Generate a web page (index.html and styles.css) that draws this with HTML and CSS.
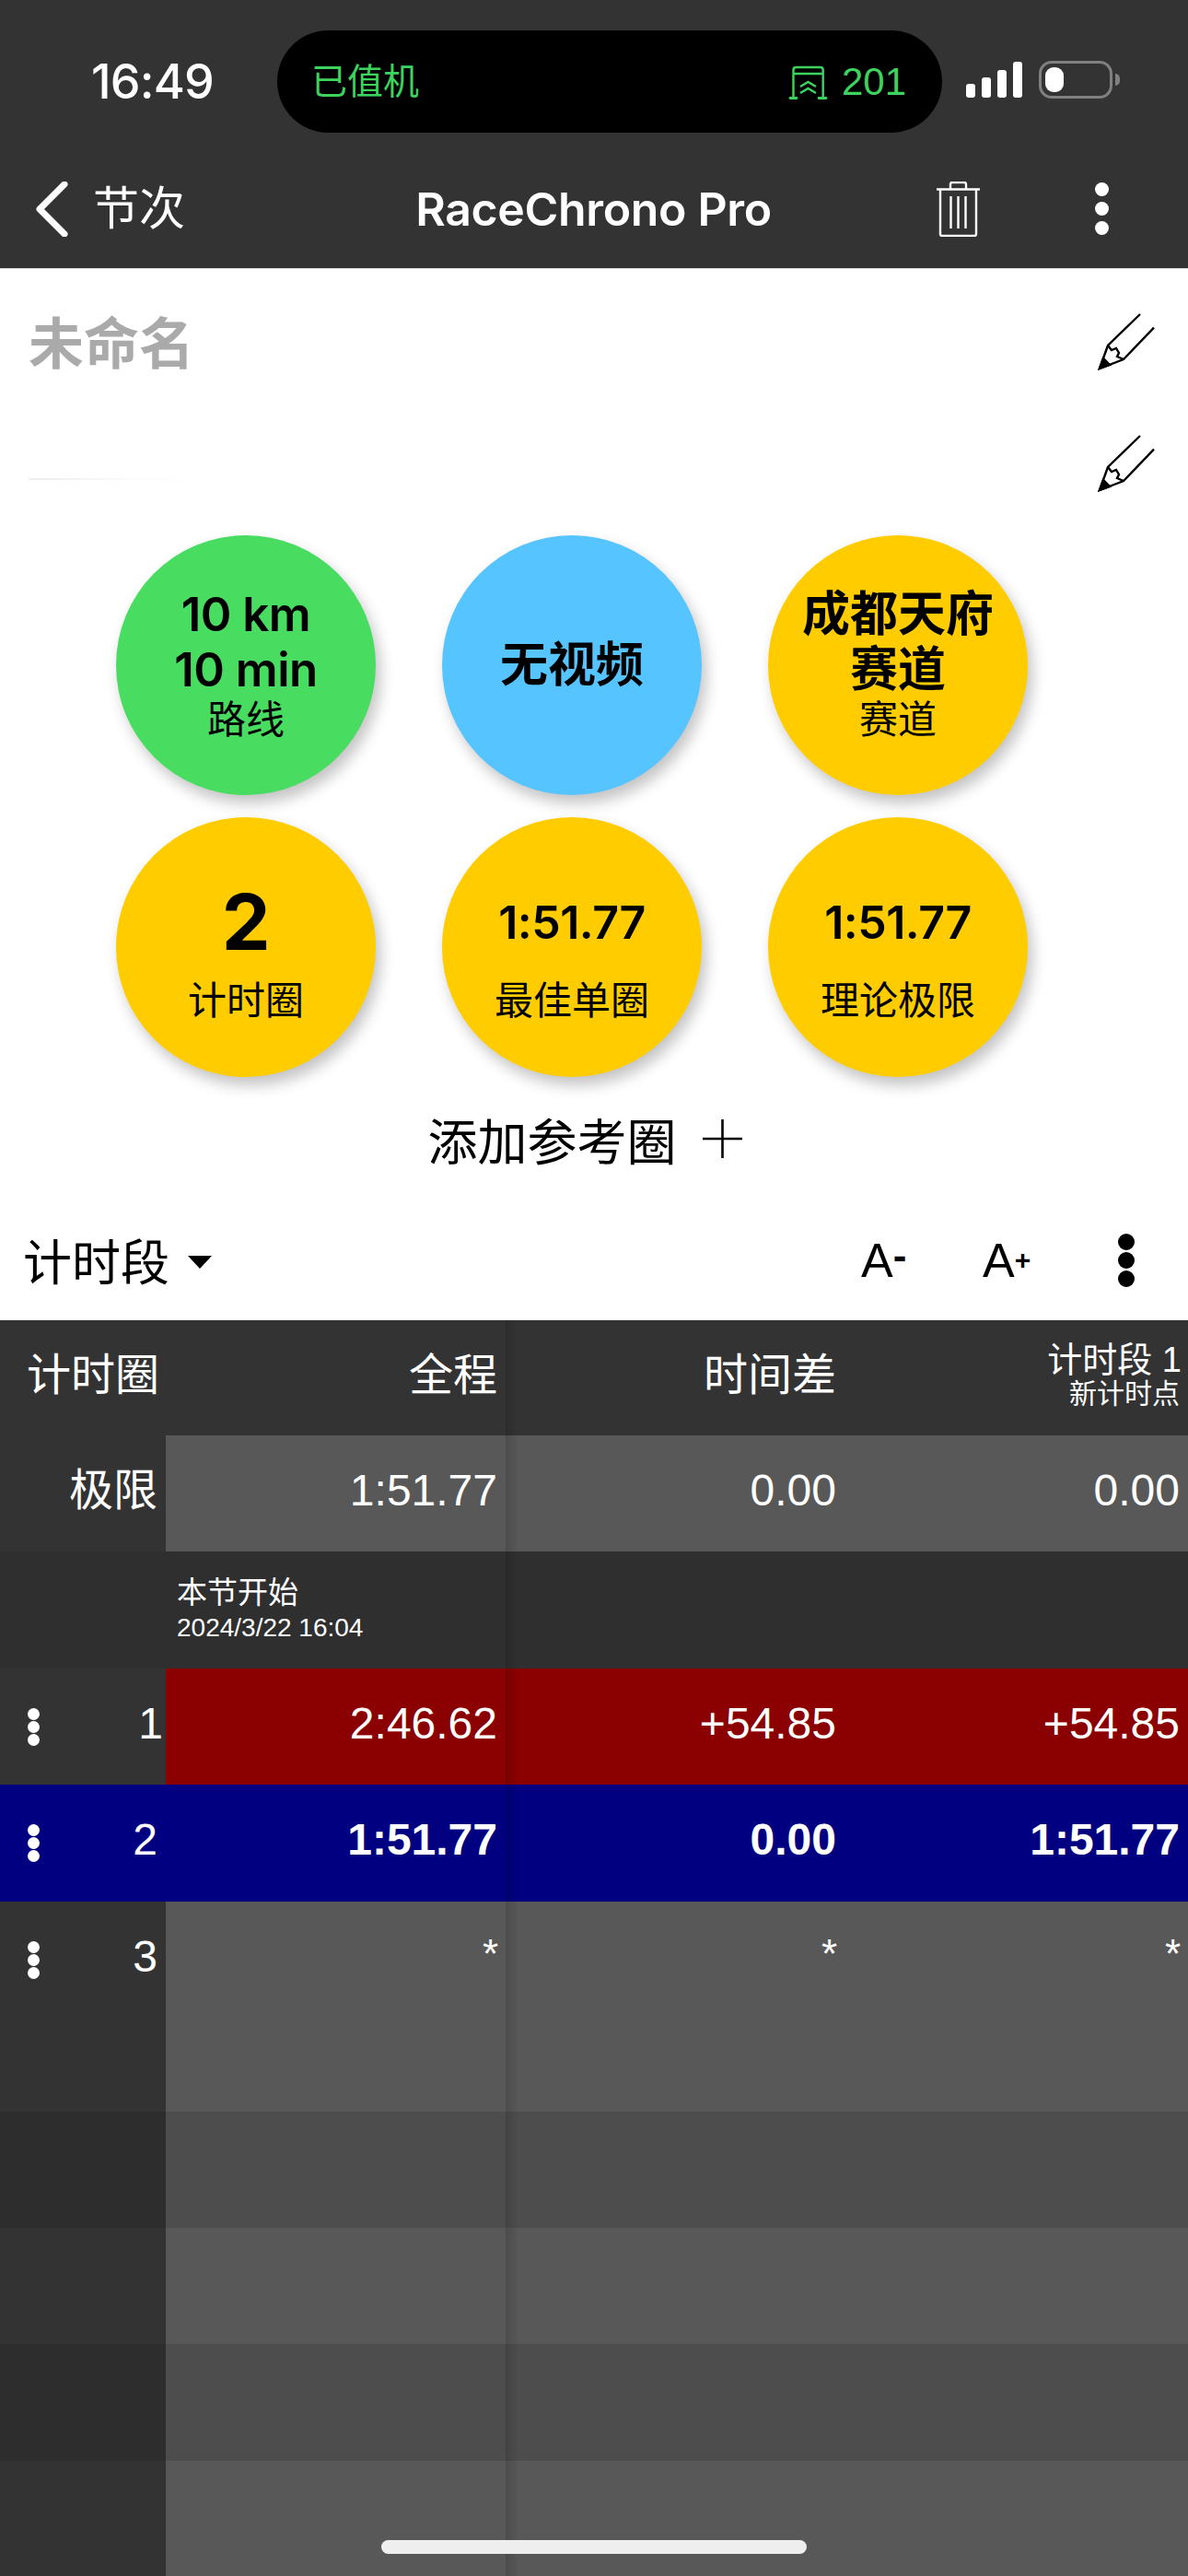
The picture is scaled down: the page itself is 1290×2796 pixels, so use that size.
FILE: index.html
```html
<!DOCTYPE html>
<html lang="zh-CN">
<head>
    <meta charset="UTF-8">
    <meta name="viewport" content="width=device-width, initial-scale=1.0">
    <title>RaceChrono Pro</title>
    <link rel="stylesheet" href="styles.css">
</head>
<body>
<div class="page">
    <header class="top">
        <div class="status">
            <span class="time">16:49</span>
            <div class="island">
                <span class="island-text">已值机</span>
                <div class="gate">
                    <svg width="60" height="50" viewBox="0 0 60 50" fill="none" stroke="#3dd35c" stroke-width="2.4">
                        <path d="M9.5 40V10Q9.5 7 12.5 7H38.7Q41.7 7 41.7 10V40"/>
                        <path d="M9.5 14H41.7"/>
                        <path d="M6 40.5H13M37 40.5H45" stroke-width="2.8" stroke-linecap="round"/>
                        <path d="M17 28L25.5 23L34 28M17 35L25.5 30L34 35"/>
                    </svg>
                    <span class="gate-no">201</span>
                </div>
            </div>
            <div class="signal">
                <span class="bar bar1"></span>
                <span class="bar bar2"></span>
                <span class="bar bar3"></span>
                <span class="bar bar4"></span>
            </div>
            <div class="battery"><span class="charge"></span></div>
            <span class="nub"></span>
        </div>
        <nav class="nav">
            <div class="nav-left">
                <svg class="chevron" width="36" height="60" viewBox="0 0 36 60" fill="none" stroke="#fff" stroke-width="7" stroke-linecap="round" stroke-linejoin="round">
                    <path d="M31 3L4 30L31 57"/>
                </svg>
                <span class="back-text">节次</span>
            </div>
            <div class="nav-title">RaceChrono Pro</div>
            <div class="nav-right">
                <svg width="47" height="60" viewBox="0 0 47 60" fill="none" stroke="#fff" stroke-width="2.4">
                    <path d="M0 8.5H47"/>
                    <path d="M15 8V3Q15 1 17 1H30Q32 1 32 3V8"/>
                    <path d="M4 8.5V57Q4 59 6 59H41Q43 59 43 57V8.5"/>
                    <path d="M15.5 16V51M23.5 16V51M31.5 16V51"/>
                </svg>
                <div class="dots dots-nav"><i></i><i></i><i></i></div>
            </div>
        </nav>
    </header>

    <section class="names">
        <div class="name-row">
            <span class="name">未命名</span>
            <svg class="pencil" width="80" height="72" viewBox="0 0 80 72" fill="none" stroke="#000" stroke-width="2.4">
                <path d="M53 6L18 40L9 65L35 55L68 20.7"/>
                <path d="M18 40L22 45L27 43L30 48L28 52L35 55"/>
                <path d="M9 65L13 54L20 61Z" fill="#000"/>
            </svg>
        </div>
        <div class="name-row">
            <span class="note-line"></span>
            <svg class="pencil" width="80" height="72" viewBox="0 0 80 72" fill="none" stroke="#000" stroke-width="2.4">
                <path d="M53 6L18 40L9 65L35 55L68 20.7"/>
                <path d="M18 40L22 45L27 43L30 48L28 52L35 55"/>
                <path d="M9 65L13 54L20 61Z" fill="#000"/>
            </svg>
        </div>
    </section>

    <section class="circles">
        <div class="circle green">
            <div class="big">10 km</div>
            <div class="big">10 min</div>
            <div class="label">路线</div>
        </div>
        <div class="circle blue">
            <div class="big cjk">无视频</div>
        </div>
        <div class="circle yellow">
            <div class="big cjk">成都天府</div>
            <div class="big cjk">赛道</div>
            <div class="label">赛道</div>
        </div>
        <div class="circle yellow stat">
            <div class="value huge">2</div>
            <div class="label">计时圈</div>
        </div>
        <div class="circle yellow stat">
            <div class="value">1:51.77</div>
            <div class="label">最佳单圈</div>
        </div>
        <div class="circle yellow stat">
            <div class="value">1:51.77</div>
            <div class="label">理论极限</div>
        </div>
    </section>

    <div class="add-ref">
        <span>添加参考圈</span>
        <svg width="43" height="42" viewBox="0 0 43 42" stroke="#000" stroke-width="2.6"><path d="M0 21H43M21.5 0V42"/></svg>
    </div>

    <div class="toolbar">
        <span class="tool-title">计时段</span>
        <span class="caret"></span>
        <span class="font-btn minus-btn">A<small>-</small></span>
        <span class="font-btn">A<small>+</small></span>
        <div class="dots dots-tool"><i></i><i></i><i></i></div>
    </div>

    <div class="table">
        <div class="row head">
            <div class="cell lap lap-head">计时圈</div>
            <div class="cell">全程</div>
            <div class="cell">时间差</div>
            <div class="cell sector">
                <div class="sector-name">计时段 1</div>
                <div class="sector-sub">新计时点</div>
            </div>
        </div>
        <div class="row">
            <div class="cell lap">极限</div>
            <div class="cell grey">1:51.77</div>
            <div class="cell grey">0.00</div>
            <div class="cell grey">0.00</div>
        </div>
        <div class="row session">
            <div class="cell lap"></div>
            <div class="cell start">
                <div class="start-name">本节开始</div>
                <div class="start-date">2024/3/22 16:04</div>
            </div>
            <div class="cell"></div>
            <div class="cell"></div>
        </div>
        <div class="row slow">
            <div class="cell lap lap-one"><div class="dots"><i></i><i></i><i></i></div>1</div>
            <div class="cell">2:46.62</div>
            <div class="cell">+54.85</div>
            <div class="cell">+54.85</div>
        </div>
        <div class="row best">
            <div class="cell lap"><div class="dots"><i></i><i></i><i></i></div>2</div>
            <div class="cell">1:51.77</div>
            <div class="cell">0.00</div>
            <div class="cell">1:51.77</div>
        </div>
        <div class="row tall">
            <div class="cell lap"><div class="dots"><i></i><i></i><i></i></div>3</div>
            <div class="cell grey star">*</div>
            <div class="cell grey star">*</div>
            <div class="cell grey star">*</div>
        </div>
        <div class="row even">
            <div class="cell lap"></div><div class="cell"></div><div class="cell"></div><div class="cell"></div>
        </div>
        <div class="row">
            <div class="cell lap"></div><div class="cell grey"></div><div class="cell grey"></div><div class="cell grey"></div>
        </div>
        <div class="row even">
            <div class="cell lap"></div><div class="cell"></div><div class="cell"></div><div class="cell"></div>
        </div>
        <div class="row last">
            <div class="cell lap"></div><div class="cell grey"></div><div class="cell grey"></div><div class="cell grey"></div>
        </div>
        <div class="col-shadow"></div>
    </div>

    <div class="home-bar"></div>
</div>
</body>
</html>
```

FILE: styles.css
```css
* {
    box-sizing: border-box;
}
body {
    margin: 0;
    background: #fff;
    font-family: "Liberation Sans", "Noto Sans CJK SC", sans-serif;
    color: #000;
}
.page {
    position: relative;
    width: 1290px;
    height: 2796px;
    overflow: hidden;
}

/* status bar + nav */
.top {
    height: 292px;
    background: #333;
    color: #fff;
    border-bottom: 1px solid #ddd;
}
.status {
    display: flex;
    align-items: center;
    height: 144px;
    padding: 33px 0 0 99px;
}
.time {
    width: 202px;
    font-family: Inter, sans-serif;
    font-size: 52px;
    font-weight: 500;
    letter-spacing: -0.8px;
}
.island {
    display: flex;
    align-items: center;
    justify-content: space-between;
    width: 722px;
    height: 111px;
    padding: 0 39px 0 37px;
    background: #000;
    border-radius: 56px;
    color: #3dd35c;
}
.island-text {
    font-size: 39px;
    line-height: 40px;
}
.gate {
    display: flex;
    align-items: center;
    gap: 2px;
}
.gate svg {
    margin-top: 5px;
}
.gate-no {
    font-size: 42px;
    line-height: 44px;
}
.signal {
    display: flex;
    align-items: flex-end;
    gap: 7px;
    margin: -4px 0 0 26px;
    height: 39px;
}
.bar {
    width: 10px;
    background: #fff;
    border-radius: 3px;
}
.bar1 { height: 15px; }
.bar2 { height: 22px; }
.bar3 { height: 30px; }
.bar4 { height: 39px; }
.battery {
    width: 80px;
    height: 41px;
    margin: -4px 0 0 18px;
    padding: 3.5px;
    border: 3.5px solid #808080;
    border-radius: 14px;
}
.charge {
    display: block;
    width: 20px;
    height: 27px;
    background: #fff;
    border-radius: 9px;
}
.nub {
    width: 5px;
    height: 13px;
    margin: -4px 0 0 3px;
    background: #808080;
    border-radius: 0 6px 6px 0;
}
.nav {
    display: grid;
    grid-template-columns: 1fr auto 1fr;
    align-items: center;
    height: 147px;
    padding: 18px 86px 0 39px;
}
.nav-left {
    display: flex;
    align-items: center;
    gap: 26px;
}
.back-text {
    font-size: 50px;
    line-height: 60px;
}
.nav-title {
    font-family: Inter, sans-serif;
    font-size: 50px;
    font-weight: 600;
    letter-spacing: -0.35px;
    margin-left: 46px;
}
.nav-right {
    display: flex;
    align-items: center;
    justify-content: flex-end;
    gap: 125px;
}
.dots {
    display: flex;
    flex-direction: column;
    gap: 1px;
}
.dots i {
    display: block;
    width: 13px;
    height: 13px;
    background: #fff;
    border-radius: 50%;
}
.dots-nav {
    gap: 6px;
}
.dots-nav i {
    width: 15px;
    height: 15px;
}
.dots-tool {
    gap: 2px;
}
.dots-tool i {
    width: 18px;
    height: 18px;
    background: #000;
}

/* session name */
.names {
    padding: 13px 25px 0 31px;
}
.name-row {
    display: flex;
    justify-content: space-between;
    align-items: center;
    height: 132px;
}
.name {
    font-size: 60px;
    font-weight: 700;
    color: #aaa;
    margin-top: -5px;
}
.note-line {
    width: 239px;
    height: 2px;
    margin-top: 34px;
    background: linear-gradient(to right, #ececec, #fbfbfb 45%, #fff);
}

/* summary circles */
.circles {
    display: grid;
    grid-template-columns: repeat(3, 282px);
    column-gap: 72px;
    row-gap: 24px;
    padding: 12px 0 0 126px;
}
.circle {
    display: flex;
    flex-direction: column;
    align-items: center;
    justify-content: center;
    width: 282px;
    height: 282px;
    border-radius: 50%;
    box-shadow: 5px 9px 16px rgba(0, 0, 0, 0.24);
}
.green { background: #48dc60; }
.blue { background: #55c4ff; }
.yellow { background: #ffcc00; }
.big {
    font-family: Inter, "Noto Sans CJK SC", sans-serif;
    font-size: 51px;
    font-weight: 600;
    line-height: 60px;
    letter-spacing: -0.5px;
}
.cjk {
    font-size: 52px;
    letter-spacing: 0;
}
.label {
    font-size: 42px;
    line-height: 50px;
}
.stat {
    padding-top: 7px;
}
.value {
    font-family: Inter, sans-serif;
    font-size: 50px;
    font-weight: 600;
    line-height: 100px;
    margin-bottom: 11px;
    letter-spacing: -0.5px;
}
.huge {
    font-size: 84px;
    font-weight: 700;
}

.add-ref {
    display: flex;
    align-items: center;
    justify-content: center;
    gap: 28px;
    height: 134px;
    padding-right: 20px;
    font-size: 54px;
}
.toolbar {
    display: flex;
    align-items: center;
    height: 130px;
    padding: 0 58px 0 25px;
}
.tool-title {
    font-size: 53px;
    margin-top: -2px;
}
.caret {
    width: 0;
    height: 0;
    margin: 4px 0 0 20px;
    border-left: 13px solid transparent;
    border-right: 13px solid transparent;
    border-top: 14px solid #000;
}
.font-btn {
    width: 132px;
    font-size: 52px;
}
.font-btn small {
    font-size: 30px;
    font-weight: 700;
    position: relative;
    top: -8px;
}
.minus-btn {
    margin-left: auto;
}
.minus-btn small {
    font-size: 44px;
}
.dots-tool {
    margin-left: 15px;
}

/* lap table */
.table {
    position: relative;
    background: #333;
    color: #fff;
    font-size: 48px;
}
.row {
    display: grid;
    grid-template-columns: 180px 369px 368px 373px;
    height: 126.4px;
    line-height: 120px;
}
.cell {
    padding-right: 9px;
    text-align: right;
}
.head {
    height: 125px;
    background: #333;
}
.lap {
    display: flex;
    justify-content: flex-end;
    align-items: flex-start;
    padding: 0 9px 0 30px;
    background: #333;
}
.lap .dots {
    margin: 43px auto 0 0;
}
.lap-head {
    justify-content: flex-start;
    padding: 0 0 0 29px;
}
.lap-one {
    padding-right: 3px;
}
.grey {
    background: #585858;
}
.star {
    font-size: 44px;
    line-height: 114px;
    padding-right: 8px;
}
.sector {
    padding: 22px 7px 0 0;
}
.sector-name {
    font-size: 38px;
    line-height: 42px;
}
.sector-sub {
    font-size: 30px;
    line-height: 32px;
    padding-right: 2px;
}
.session {
    background: #2f2f2f;
}
.session .lap {
    background: #2f2f2f;
}
.start {
    padding: 22px 0 0 12px;
    text-align: left;
}
.start-name {
    font-size: 33px;
    line-height: 46px;
}
.start-date {
    font-size: 28px;
    line-height: 30px;
}
.slow {
    background: #8b0000;
}
.best {
    background: #000080;
    font-weight: 700;
}
.best .lap {
    background: #000080;
    font-weight: 400;
}
.tall {
    height: 228px;
}
.even {
    background: #4d4d4d;
}
.even .lap {
    background: #2d2d2d;
}
.last {
    height: 130px;
}
.col-shadow {
    position: absolute;
    top: 0;
    bottom: 0;
    left: 549px;
    width: 14px;
    background: linear-gradient(to right, rgba(0, 0, 0, 0.14), rgba(0, 0, 0, 0));
}
.home-bar {
    position: absolute;
    left: 414px;
    top: 2757px;
    width: 462px;
    height: 15px;
    background: #eee;
    border-radius: 8px;
}
```
